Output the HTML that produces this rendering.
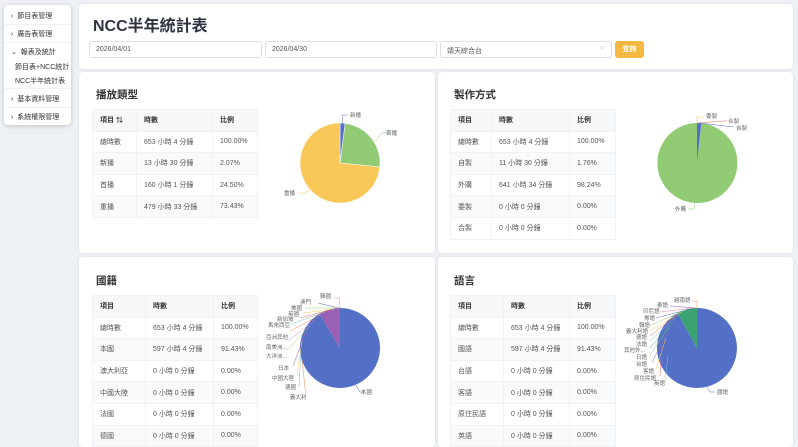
<!DOCTYPE html>
<html><head><meta charset="utf-8"><style>
*{margin:0;padding:0;box-sizing:border-box}
body{width:798px;height:441px;overflow:hidden;background:#edf0f5;font-family:"Liberation Sans","Noto Sans CJK TC",sans-serif;color:#333;position:relative}
.card{position:absolute;background:#fff;border-radius:4px;box-shadow:0 0 2px rgba(0,0,0,.08)}
.side{left:4px;top:5px;width:67px;height:120px;box-shadow:0 1px 4px rgba(0,0,0,.2)}
.side div{position:absolute;left:0;width:67px;font-size:7px;color:#333;padding-left:7px;white-space:nowrap}
.side .sep{border-top:1px solid #f0f0f0}
.ab{position:absolute;white-space:nowrap}
.inp{position:absolute;top:41px;height:17px;border:1px solid #dcdfe6;border-radius:3px;font-size:7px;color:#555;padding:4px 6px;background:#fff}
.btn{position:absolute;left:615px;top:41px;width:29px;height:17px;background:#f5b942;border-radius:3px;color:#fff;font-size:7px;font-weight:bold;text-align:center;line-height:17px}
h2{position:absolute;font-size:10.5px;font-weight:bold;color:#333}
table{position:absolute;border-collapse:collapse;font-size:7px;color:#555}
td,th{border:1px solid #f1f2f5;text-align:left;padding:0 7px;height:21.6px;font-weight:normal;white-space:nowrap;vertical-align:middle}
th{font-weight:bold;color:#333;background:#f7f8fa}
tr:nth-child(odd) td{background:#f9fafc}
svg text{font-size:5.5px;fill:#666;font-family:"Liberation Sans","Noto Sans CJK TC",sans-serif}
</style></head><body>
<div class="card side">
<div style="top:6px">›&nbsp; 節目表管理</div>
<div class="sep" style="top:19px;height:1px"></div>
<div style="top:24px">›&nbsp; 廣告表管理</div>
<div class="sep" style="top:37px;height:1px"></div>
<div style="top:42px">⌄&nbsp; 報表及統計</div>
<div style="top:57px;padding-left:11px">節目表+NCC統計</div>
<div style="top:71px;padding-left:11px">NCC半年統計表</div>
<div class="sep" style="top:83px;height:1px"></div>
<div style="top:89px">›&nbsp; 基本資料管理</div>
<div class="sep" style="top:102px;height:1px"></div>
<div style="top:107px">›&nbsp; 系統權限管理</div>
</div>

<div class="card" style="left:79px;top:4px;width:714px;height:65px"></div>
<div class="ab" style="left:93px;top:12px;font-size:16px;font-weight:bold;color:#2d3340">NCC半年統計表</div>
<div class="inp" style="left:89px;width:173px">2026/04/01</div>
<div class="inp" style="left:265px;width:172px">2026/04/30</div>
<div class="inp" style="left:440px;width:172px">靖天綜合台<span style="position:absolute;right:6px;top:2px;color:#999">⌵</span></div>
<div class="btn">查詢</div>

<div class="card" style="left:79px;top:72px;width:356px;height:181px"></div>
<div class="card" style="left:438px;top:72px;width:355px;height:181px"></div>
<div class="card" style="left:79px;top:257px;width:356px;height:190px"></div>
<div class="card" style="left:438px;top:257px;width:355px;height:190px"></div>

<h2 style="left:96px;top:87px">播放類型</h2>
<table style="left:92px;top:109px;width:166px">
<tr><th style="width:44px">項目 ⇅</th><th style="width:76px">時數</th><th>比例</th></tr>
<tr><td>總時數</td><td>653 小時 4 分鐘</td><td>100.00%</td></tr>
<tr><td>新播</td><td>13 小時 30 分鐘</td><td>2.07%</td></tr>
<tr><td>首播</td><td>160 小時 1 分鐘</td><td>24.50%</td></tr>
<tr><td>重播</td><td>479 小時 33 分鐘</td><td>73.43%</td></tr>
</table>

<h2 style="left:454px;top:87px">製作方式</h2>
<table style="left:450px;top:109px;width:166px">
<tr><th style="width:41px">項目</th><th style="width:78px">時數</th><th>比例</th></tr>
<tr><td>總時數</td><td>653 小時 4 分鐘</td><td>100.00%</td></tr>
<tr><td>自製</td><td>11 小時 30 分鐘</td><td>1.76%</td></tr>
<tr><td>外購</td><td>641 小時 34 分鐘</td><td>98.24%</td></tr>
<tr><td>委製</td><td>0 小時 0 分鐘</td><td>0.00%</td></tr>
<tr><td>合製</td><td>0 小時 0 分鐘</td><td>0.00%</td></tr>
</table>

<h2 style="left:96px;top:273px">國籍</h2>
<table style="left:92px;top:295px;width:166px">
<tr><th style="width:53px">項目</th><th style="width:68px">時數</th><th>比例</th></tr>
<tr><td>總時數</td><td>653 小時 4 分鐘</td><td>100.00%</td></tr>
<tr><td>本國</td><td>597 小時 4 分鐘</td><td>91.43%</td></tr>
<tr><td>澳大利亞</td><td>0 小時 0 分鐘</td><td>0.00%</td></tr>
<tr><td>中國大陸</td><td>0 小時 0 分鐘</td><td>0.00%</td></tr>
<tr><td>法國</td><td>0 小時 0 分鐘</td><td>0.00%</td></tr>
<tr><td>德國</td><td>0 小時 0 分鐘</td><td>0.00%</td></tr>
</table>

<h2 style="left:454px;top:273px">語言</h2>
<table style="left:450px;top:295px;width:166px">
<tr><th style="width:53px">項目</th><th style="width:66px">時數</th><th>比例</th></tr>
<tr><td>總時數</td><td>653 小時 4 分鐘</td><td>100.00%</td></tr>
<tr><td>國語</td><td>597 小時 4 分鐘</td><td>91.43%</td></tr>
<tr><td>台語</td><td>0 小時 0 分鐘</td><td>0.00%</td></tr>
<tr><td>客語</td><td>0 小時 0 分鐘</td><td>0.00%</td></tr>
<tr><td>原住民語</td><td>0 小時 0 分鐘</td><td>0.00%</td></tr>
<tr><td>英語</td><td>0 小時 0 分鐘</td><td>0.00%</td></tr>
</table>

<svg width="798" height="441" style="position:absolute;left:0;top:0" fill="none">
<path d="M340 163 L340 123 A40 40 0 0 1 345.19 123.34Z" fill="#5470c6" stroke="#fff" stroke-width=".5"/>
<path d="M340 163 L345.19 123.34 A40 40 0 0 1 379.8 166.94Z" fill="#91cc75" stroke="#fff" stroke-width=".5"/>
<path d="M340 163 L379.8 166.94 A40 40 0 1 1 340 123Z" fill="#fac858" stroke="#fff" stroke-width=".5"/>
<path d="M342.6 123 L342 115 L348 115" stroke="#5470c6" stroke-width=".5"/><text x="350" y="117">新播</text>
<path d="M375 141 L382 133 L388 133" stroke="#91cc75" stroke-width=".5"/><text x="386" y="135">首播</text>
<path d="M310 190 L304 193 L298 193" stroke="#fac858" stroke-width=".5"/><text x="284" y="195">重播</text>
<path d="M697 163 L697 123 A40 40 0 0 1 701.4 123.2Z" fill="#5470c6"/>
<path d="M697 163 L701.4 123.2 A40 40 0 1 1 697 123Z" fill="#91cc75"/>
<path d="M697 123 L697 117 L704 117" stroke="#fac858" stroke-width=".5"/><text x="706" y="118">委製</text>
<path d="M698 123 L723 121 L727 121" stroke="#ee6666" stroke-width=".5"/><text x="728" y="123">合製</text>
<path d="M700 123 L733 127" stroke="#5470c6" stroke-width=".5"/><text x="736" y="130">自製</text>
<path d="M695 203 L694 209 L688 209" stroke="#91cc75" stroke-width=".5"/><text x="675" y="211">外購</text>
<path d="M340 348 L340 308 A40 40 0 1 1 319.46 313.68Z" fill="#5470c6"/>
<path d="M340 348 L319.46 313.68 A40 40 0 0 1 340 308Z" fill="#9a60b4"/>
<g stroke-width=".5">
<path d="M340 308 L339 298 L334 298" stroke="#ea7ccc"/>
<path d="M339 308 L318 303" stroke="#5470c6"/>
<path d="M337 308 L305 308" stroke="#91cc75"/>
<path d="M334 309 L303 313" stroke="#fac858"/>
<path d="M330 310 L300 318" stroke="#ee6666"/>
<path d="M325 312 L291 324" stroke="#73c0de"/>
<path d="M320 315 L290 331" stroke="#fc8452"/>
<path d="M315 320 L288 341" stroke="#ea7ccc"/>
<path d="M310 326 L287 350" stroke="#91cc75"/>
<path d="M305 334 L293 366" stroke="#9a60b4"/>
<path d="M302 341 L297 375" stroke="#fac858"/>
<path d="M301 351 L299 387" stroke="#73c0de"/>
<path d="M302 360 L306 397" stroke="#fc8452"/>
<path d="M356 385 L360 392 L364 392" stroke="#5470c6"/>
</g>
<text x="320" y="298">韓國</text><text x="300" y="304">澳門</text><text x="291" y="310">美國</text>
<text x="288" y="316">英國</text><text x="277" y="321">新加坡</text><text x="268" y="327">馬來西亞</text>
<text x="266" y="339">亞洲其他</text><text x="266" y="349">南美洲...</text><text x="266" y="358">大洋洲...</text>
<text x="278" y="370">日本</text><text x="272" y="380">中國大陸</text><text x="285" y="389">德國</text>
<text x="290" y="399">義大利</text><text x="361" y="394">本國</text>
<path d="M697 348 L697 308 A40 40 0 1 1 677.6 313Z" fill="#5470c6"/>
<path d="M697 348 L677.6 313 A40 40 0 0 1 697 308Z" fill="#3ba272"/>
<g stroke-width=".5">
<path d="M697 308 L697 301 L692 301" stroke="#fc8452"/>
<path d="M696 308 L670 306" stroke="#9a60b4"/>
<path d="M694 308 L660 312" stroke="#ea7ccc"/>
<path d="M690 309 L656 318" stroke="#5470c6"/>
<path d="M686 310 L651 325" stroke="#91cc75"/>
<path d="M682 312 L651 330" stroke="#fac858"/>
<path d="M678 314 L650 336" stroke="#ee6666"/>
<path d="M675 318 L650 341" stroke="#73c0de"/>
<path d="M672 322 L650 348" stroke="#3ba272"/>
<path d="M670 326 L650 355" stroke="#91cc75"/>
<path d="M668 332 L652 362" stroke="#9a60b4"/>
<path d="M666 338 L656 369" stroke="#fac858"/>
<path d="M662 346 L660 376" stroke="#ee6666"/>
<path d="M668 355 L665 382" stroke="#73c0de"/>
<path d="M707 387 L710 392 L715 392" stroke="#5470c6"/>
</g>
<text x="674" y="302">越南語</text><text x="657" y="307">泰語</text><text x="643" y="313">印尼語</text>
<text x="644" y="320">粵語</text><text x="639" y="327">韓語</text><text x="626" y="333">義大利語</text>
<text x="636" y="339">德語</text><text x="636" y="346">法語</text><text x="624" y="352">其他外...</text>
<text x="636" y="359">日語</text><text x="636" y="366">台語</text><text x="643" y="373">客語</text>
<text x="634" y="380">原住民語</text><text x="654" y="385">英語</text><text x="717" y="394">國語</text>
</svg>
</body></html>
